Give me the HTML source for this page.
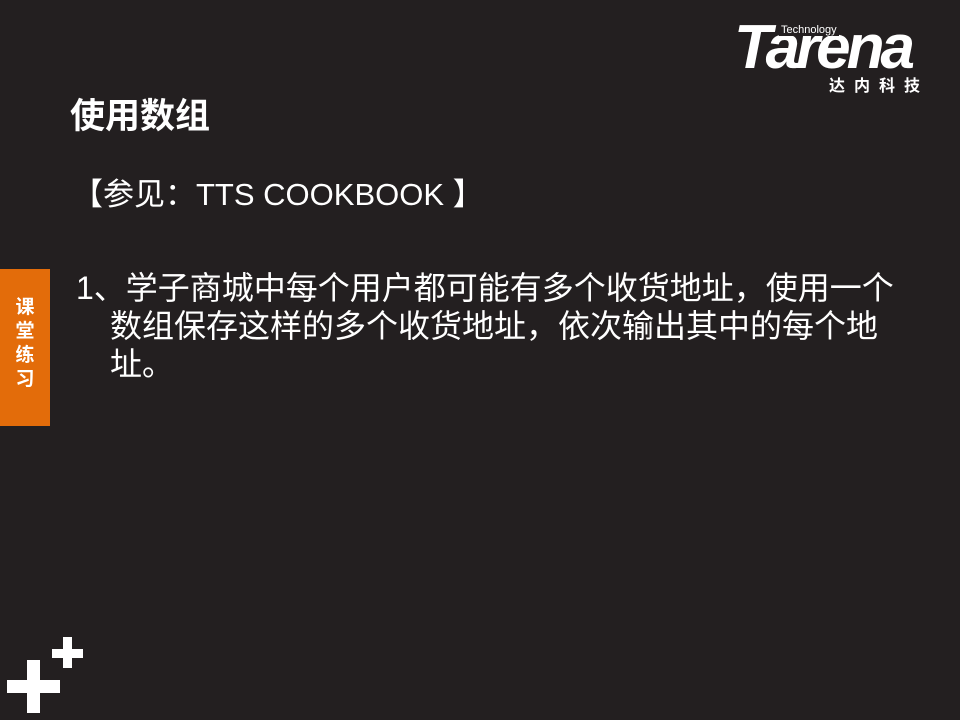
<!DOCTYPE html>
<html><head><meta charset="utf-8"><style>
body{margin:0;width:960px;height:720px;background:#231f20;position:relative;overflow:hidden;font-family:"Liberation Sans","Noto Sans CJK SC",sans-serif;color:#fff}
.a{position:absolute}
</style></head><body>
<div class="a" style="left:734px;top:18px;font:italic bold 62px 'Liberation Sans',sans-serif;letter-spacing:-4px;line-height:60px">Tarena</div>
<div class="a" style="left:779px;top:24px;font-size:11px;line-height:12px;background:#231f20;padding:0 2px">Technology</div>
<div class="a" style="left:829px;top:78px;font-size:16px;font-weight:bold;letter-spacing:9px;line-height:18px">达内科技</div>
<div class="a" style="left:70px;top:95px;font-size:35px;font-weight:bold;line-height:44px">使用数组</div>
<div class="a" style="left:72px;top:174px;font-size:31px;line-height:42px">【参见：TTS COOKBOOK 】</div>
<div class="a" style="left:0;top:269px;width:50px;height:157px;background:#e36c0a"></div>
<div class="a" style="left:12px;top:296px;width:26px;font-size:19px;font-weight:bold;line-height:24px;text-align:center">课<br>堂<br>练<br>习</div>
<div class="a" style="left:76px;top:269px;width:860px;font-size:32px;line-height:38px">1、学子商城中每个用户都可能有多个收货地址，使用一个<br><span style="padding-left:34px">数组保存这样的多个收货地址，依次输出其中的每个地</span><br><span style="padding-left:34px">址。</span></div>
<div class="a" style="left:7px;top:680px;width:53px;height:13px;background:#fff"></div>
<div class="a" style="left:27px;top:660px;width:13px;height:53px;background:#fff"></div>
<div class="a" style="left:52px;top:649px;width:31px;height:9px;background:#fff"></div>
<div class="a" style="left:63px;top:637px;width:9px;height:31px;background:#fff"></div>
</body></html>
